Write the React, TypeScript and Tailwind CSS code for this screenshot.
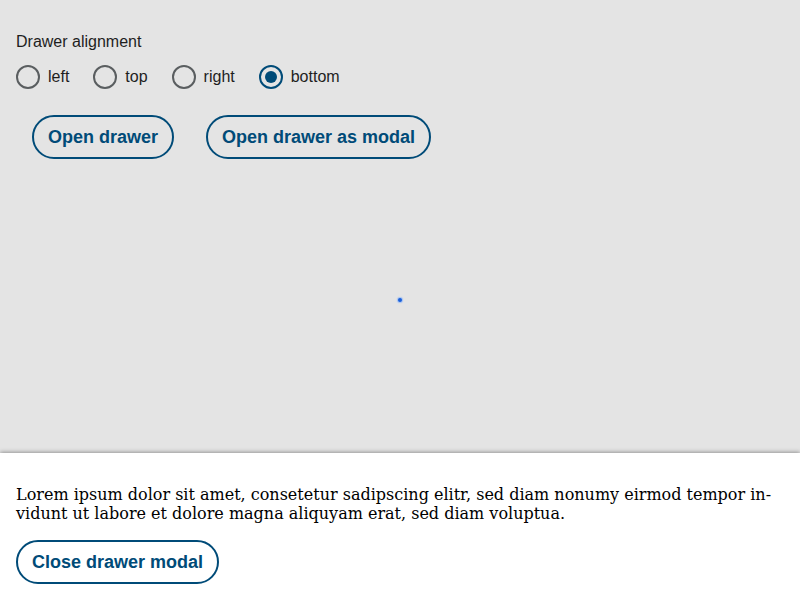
import React from "react";

function Radio({ label, checked }: { label: string; checked?: boolean }) {
  return (
    <label className="flex items-center gap-2">
      <span
        className={
          "flex h-6 w-6 items-center justify-center rounded-full border-2 " +
          (checked ? "border-[#004b78]" : "border-[#5a5e60]")
        }
      >
        {checked && <span className="h-3 w-3 rounded-full bg-[#004b78]" />}
      </span>
      <span className="text-base leading-6 text-[#1e1e1e]">{label}</span>
    </label>
  );
}

export default function App() {
  return (
    <div
      className="flex h-screen flex-col bg-[#e4e4e4]"
      style={{ fontFamily: '"Liberation Sans", Arial, sans-serif' }}
    >
      <div className="relative flex-1 px-4 pt-[32px]">
        <div className="text-base leading-5 text-[#1e1e1e]">Drawer alignment</div>
        <div className="mt-[13px] flex gap-6">
          <Radio label="left" />
          <Radio label="top" />
          <Radio label="right" />
          <Radio label="bottom" checked />
        </div>
        <div className="mt-[26px] flex gap-8 px-4">
          <button className="block h-11 rounded-full border-2 border-[#004b78] px-[14px] text-lg font-bold text-[#004b78]">
            Open drawer
          </button>
          <button className="block h-11 rounded-full border-2 border-[#004b78] px-[14px] text-lg font-bold text-[#004b78]">
            Open drawer as modal
          </button>
        </div>
        <span className="absolute left-[398px] top-[298px] h-[4px] w-[4px] rounded-full bg-[#1a5fd8] shadow-[0_0_1px_1px_rgba(120,170,255,0.6)]" />
      </div>
      <div className="relative bg-white px-4 pb-4 pt-8 shadow-[0_-1px_4px_rgba(0,0,0,0.35)]">
        <p
          className="text-base leading-[19px] text-black"
          style={{ fontFamily: '"DejaVu Serif", serif' }}
        >
          Lorem ipsum dolor sit amet, consetetur sadipscing elitr, sed diam nonumy eirmod tempor in-
          <br />
          vidunt ut labore et dolore magna aliquyam erat, sed diam voluptua.
        </p>
        <button className="mt-[17px] block h-11 rounded-full border-2 border-[#004b78] px-[14px] text-lg font-bold text-[#004b78]">
          Close drawer modal
        </button>
      </div>
    </div>
  );
}
